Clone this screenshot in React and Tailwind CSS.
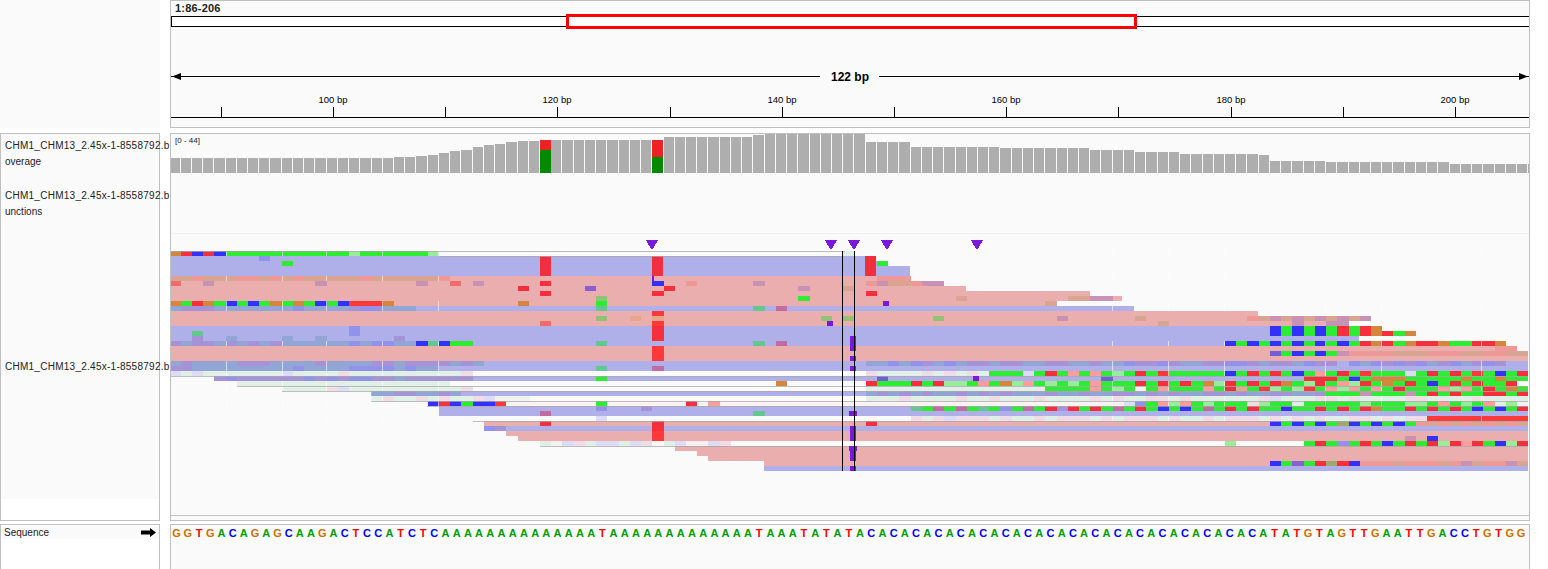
const BLUE = '#afafea'
const PINK = '#ebaeae'
const WHITE = '#fafafa'
const FAINT = '#eef4f0'

const COLORS = {
  a: '#2eec33', c: '#3232fa', t: '#f5303c', T: '#ff3838', o: '#d4863c',
  p: '#d8a690', q: '#ee9898', u: '#c892b4', n: '#90c472', R: '#f26a6a', O: '#e4a888',
  d: '#92a6d6', e: '#a692d6', f: '#9292ea', h: '#62c890', i: '#c06ca0',
  k: '#e0f0e6', l: '#f0dce6', j: '#dcdcf6', w: '#f6f0f0',
  M: '#98ee98', N: '#ff9c9c', x: '#7060d8', y: '#a0a870', z: '#8a60d0',
}

const colX = c => Math.max(171, Math.round(169.4 + 11.23 * c))

// read bodies: y, height, x start, x end, colour
const READS = [
  [251, 5, 171, 845, WHITE], [256, 5, 171, 876, BLUE], [261, 5, 171, 887, BLUE], [266, 10, 171, 910, BLUE],
  [276, 5, 171, 910, PINK], [281, 5, 171, 943, PINK], [286, 5, 171, 966, PINK], [291, 5, 171, 1090, PINK],
  [296, 5, 171, 1122, PINK], [301, 5, 171, 1056, PINK], [306, 5, 171, 1134, BLUE], [311, 5, 171, 1258, PINK],
  [316, 10, 171, 1348, PINK], [326, 5, 171, 1381, BLUE], [331, 5, 171, 1415, BLUE], [336, 5, 171, 1359, BLUE],
  [341, 5, 171, 1505, BLUE], [346, 5, 171, 1516, PINK], [351, 10, 171, 1528, PINK], [361, 10, 171, 1528, BLUE],
  [371, 5, 171, 473, FAINT], [371, 5, 473, 1528, WHITE], [376, 5, 214, 1528, BLUE], [381, 5, 237, 450, FAINT],
  [381, 5, 450, 1528, WHITE], [386, 5, 282, 473, FAINT], [386, 5, 473, 1528, WHITE], [391, 5, 371, 1528, BLUE],
  [396, 5, 371, 530, FAINT], [396, 5, 530, 1528, WHITE], [401, 5, 427, 1528, '#fbf2f2'], [406, 10, 439, 1528, BLUE],
  [416, 5, 473, 1528, WHITE], [421, 5, 484, 1528, PINK], [426, 5, 484, 1528, BLUE], [431, 5, 506, 1528, PINK],
  [436, 5, 518, 1528, PINK], [441, 5, 540, 1528, WHITE], [446, 5, 675, 1528, PINK], [451, 5, 697, 1528, PINK],
  [456, 5, 708, 1528, PINK], [461, 5, 764, 1528, PINK], [466, 5, 764, 1528, BLUE],
]

// thin grey lines under the low quality reads: y, x start, x end
const EDGES = [
  [251, 171, 845], [256, 440, 845], [376, 171, 1528], [386, 237, 1528], [391, 282, 1528], [401, 371, 1528],
  [406, 427, 1528], [421, 473, 1528], [446, 540, 1528],
]

// mismatches per row: y, first column, one code per column ('.' skips a column)
const BASES = [
  [251, 0, 'otctcaaaaaaaaaaaMaaaaaaM'], [251, 60, 'k'],
  [256, 8, 'f'], [261, 10, 'a'], [261, 63, 'a'],
  [276, 0, 'ppqpppqqpqpqpppppqppppppq'], [276, 63, 'qqq'],
  [281, 0, 'R..u.........u........u..R.u.....t.........c'], [281, 46, 'q.....u.........quppquu'],
  [286, 31, 't.....z......t'], [286, 56, 'u...p'],
  [291, 33, 't.........t..................t'],
  [296, 38, 'n.................a.............p.........pp'], [296, 82, 'uu'],
  [301, 0, 'oatoacacaoaoacacTTTo'], [301, 31, 'o......a'], [301, 78, 'p'],
  [306, 0, 'deeedddddddfddddeffddd'], [306, 38, 'h.............h.i'],
  [311, 43, 'T'],
  [316, 38, 'n..O.O..............n.n.......n..........u'], [316, 86, 'p.........qpupupupupu'],
  [321, 33, 'R.........T'], [321, 88, 'p...........u..uu'],
  [326, 16, 'f'], [326, 43, 't'], [326, 98, 'cacacatato'],
  [331, 2, 'h.............f'], [331, 43, 't'], [331, 98, 'cacacatatotao'],
  [336, 2, 'e..d....d..d......e'], [336, 43, 't'],
  [341, 0, 'edeededededdddddfdffddchcaa'], [341, 38, 'h.............h.i'],
  [341, 94, 'cacacacacacatotaottoaatto'],
  [346, 43, 'T'], [346, 118, 'qq'],
  [351, 43, 'T'], [351, 98, 'xacacauqqqqpppqqqppqqppu'],
  [356, 43, 'T'],
  [361, 0, 'deddddeeeddddeddddeedeeeeded'], [361, 62, 'ddfdfedfdeedeeddeeddeddfeefeddeeffedeedfee'],
  [361, 105, 'fdfefefdefdefe'],
  [366, 0, 'eedddddddddfddddffffdfdd'], [366, 38, 'h....i'],
  [371, 0, 'jkjkkkkkkkjkkkklkkkkkkkkkkl'],
  [371, 62, 'lkkkklklklkaaajataNaNaMataTaaaaacatatacaNataTaaajatataTacata'],
  [376, 4, 'efeeeeeefefeffeedeeeeee'], [376, 38, 'a'], [376, 63, 'x'],
  [376, 83, 'x'], [376, 101, 'tttacaoooaaaaaoaaoaat'],
  [381, 6, 'kkkkkkkkkkkkkkkkkkk'], [381, 54, 'o'],
  [381, 62, 'taaatatMMaNaoMNaMaMaN'],
  [381, 83, 'aaatatataoMtatatoaMtaNMtaoatacatataat'],
  [386, 10, 'kkkkljkkkkkkkkkkl'], [386, 62, 'kkkkkkkkkkkkkkkk'], [386, 78, 'aaaaN'],
  [386, 83, 'aMawaNaaaNatOaTMaMTaNMNaNataaaNMNataoa'],
  [391, 18, 'ddeedded'], [391, 62, 'dedededdedededddeddedde'],
  [391, 83, 'deedededdeededdeeddeaaauaaauatataattat'],
  [396, 18, 'klkklklkklj'], [396, 62, 'kkklkkkklkklkkklkkkkl'],
  [396, 83, 'klkkllklkkkkkkljkkkllklkkkkllkkkklkkkkl'],
  [401, 23, 'ctcaccT'], [401, 38, 'a'], [401, 46, 't.N'],
  [401, 83, 'wwjfaNMNaMaaalMaakaaaaaMaaaMMaNaMaNkMw'],
  [406, 38, 'f...e'], [406, 66, 'haiaiahafaiatetat'],
  [406, 83, 'aiatacacaiatataacaatatatoaatatatacacatat'],
  [411, 33, 'i..................h'],
  [416, 38, 'j'], [416, 66, 'lkljlllklkklklllk'],
  [416, 83, 'lklllklkklklllklklklkkllklkllTTTTTTTTTT'],
  [421, 33, 't.........t..................t'],
  [421, 98, 'cacacaycacacaqpqpqpqpqpp'],
  [426, 28, 'fe'], [426, 43, 't'],
  [431, 43, 'T'], [436, 43, 'T'], [436, 110, 'u.c'],
  [441, 33, 'kwjlkjjkjl.kjwwjl'], [441, 94, 'M......atafatacatatMtNtacMt'],
  [461, 98, 'cazatytcqqqpqqqpqupqqupq'],
]

// insertion markers, narrower than a base: x, y, width, height
const INSERTS = [
  [652, 276, 2, 5], [850, 336, 6, 15], [850, 356, 6, 5], [850, 366, 6, 5], [849, 411, 8, 5], [850, 426, 6, 15],
  [849, 446, 8, 5], [850, 451, 6, 10], [850, 466, 6, 5], [883, 301, 6, 5], [827, 321, 6, 5], [973, 376, 6, 5],
]

// small white gaps between overlapping reads
const SEAMS = [226, 282, 326, 382, 438, 1112, 1168, 1224, 1325, 1381, 1481]
const SEAM_ROWS = [[251, 5], [276, 5], [301, 10], [341, 5], [361, 15], [381, 10], [396, 10], [416, 5]]

const TOPS = [
  ...Array(20).fill(158), 157, 157, 156, 155, 153, 151, 150, 147, 145, 144, 142, 141, 141,
  ...Array(11).fill(140), ...Array(8).fill(137), 135, 134, 134, 134,
  ...Array(6).fill(133), ...Array(4).fill(142), ...Array(8).fill(147), ...Array(8).fill(148),
  ...Array(4).fill(150), ...Array(4).fill(152), ...Array(7).fill(154), 155,
  ...Array(5).fill(161), ...Array(11).fill(162), ...Array(8).fill(164),
]

const SEQUENCE = 'GGTGACAGAGCAAGACTCCATCTC' + 'A'.repeat(14) + 'T' + 'A'.repeat(13) + 'TAAATATAT' + 'AC'.repeat(18) + 'ATATGTAGTTGAATTGACCTGTGG'

const BASE_CLASS = { A: 'text-[#009f00]', C: 'text-[#0000ff]', G: 'text-[#cc7000]', T: 'text-[#ff0000]' }

const RULER_TICKS = [221, 333, 445, 557, 670, 782, 894, 1006, 1118, 1231, 1343, 1455]
const RULER_LABELS = [[333, '100 bp'], [557, '120 bp'], [782, '140 bp'], [1006, '160 bp'], [1231, '180 bp'], [1455, '200 bp']]

function Ruler() {
  return (
    <svg width="1358" height="126" viewBox="171 1 1358 126" className="block" shapeRendering="crispEdges">
      <text x="175" y="12" fontSize="11" fontWeight="700" fill="#222" letterSpacing="0.2">1:86-206</text>
      <rect x="171.5" y="16.5" width="1358" height="10" fill="#fff" stroke="#000" />
      <rect x="567.5" y="15.5" width="568" height="12" fill="#fff" stroke="#f00" strokeWidth="3" />
      <rect x="171" y="76" width="649" height="1" fill="#000" />
      <rect x="879" y="76" width="650" height="1" fill="#000" />
      <polygon points="172,76.5 181,73 181,80" fill="#000" shapeRendering="auto" />
      <polygon points="1528,76.5 1519,73 1519,80" fill="#000" shapeRendering="auto" />
      <text x="850" y="81" textAnchor="middle" fontSize="12" fontWeight="700" fill="#000">122 bp</text>
      {RULER_LABELS.map(([x, label]) => (
        <text key={x} x={x} y="103" textAnchor="middle" fontSize="9.5" fill="#000">{label}</text>
      ))}
      {RULER_TICKS.map(x => <rect key={x} x={x} y="107" width="1" height="10" fill="#000" />)}
      <rect x="171" y="117" width="1358" height="1" fill="#000" />
    </svg>
  )
}

function Coverage() {
  return (
    <>
      <text x="175" y="143" fontSize="8" fill="#222">[0 - 44]</text>
      {TOPS.map((top, c) => {
        const x = colX(c)
        const w = colX(c + 1) - x - 1
        return <rect key={c} x={x} y={top} width={w} height={173 - top} fill="#aeaeae" />
      })}
      <rect x="540" y="140" width="11" height="10" fill="#ee2222" />
      <rect x="540" y="150" width="11" height="23" fill="#008a00" />
      <rect x="652" y="140" width="11" height="17" fill="#ee2222" />
      <rect x="652" y="157" width="11" height="16" fill="#008a00" />
      <rect x="171" y="233" width="1358" height="1" fill="#f0f0f0" />
    </>
  )
}

function Pileup() {
  const cells = []
  BASES.forEach(([y, from, codes], i) => {
    ;[...codes].forEach((code, n) => {
      if (!COLORS[code]) return
      const c = from + n
      if (c > 120) return
      cells.push(<rect key={`${i}-${n}`} x={colX(c)} y={y} width={colX(c + 1) - colX(c)} height="5" fill={COLORS[code]} />)
    })
  })
  return (
    <>
      {READS.map(([y, h, x1, x2, fill], i) => (
        <rect key={i} x={x1} y={y} width={x2 - x1} height={h} fill={fill} />
      ))}
      <rect x="540" y="256" width="11" height="20" fill="#f0303e" />
      <rect x="652" y="256" width="11" height="20" fill="#f0303e" />
      <rect x="865" y="256" width="11" height="20" fill="#f0303e" />
      {cells}
      {SEAM_ROWS.map(([y, h]) => SEAMS.map(x => (
        <rect key={`${y}-${x}`} x={x} y={y} width="1" height={h} fill="#fff" opacity="0.6" />
      )))}
      {EDGES.map(([y, x1, x2]) => (
        <rect key={y} x={x1} y={y} width={x2 - x1} height="1" fill="#a8a8a8" opacity="0.75" />
      ))}
      {INSERTS.map(([x, y, w, h]) => (
        <rect key={`${x}-${y}`} x={x} y={y} width={w} height={h} fill="#7a18dc" />
      ))}
      <rect x="842" y="251" width="1" height="220" fill="#000" />
      <rect x="854" y="251" width="1" height="220" fill="#000" />
      {[652, 831, 854, 887, 977].map(x => (
        <polygon key={x} points={`${x - 6},240 ${x + 6},240 ${x + 1},249 ${x - 1},249`} fill="#7a18dc" />
      ))}
      <rect x="171" y="515" width="1358" height="1" fill="#c4c4c4" />
    </>
  )
}

function TrackLabel({ lines }) {
  return (
    <div className="pl-1 whitespace-nowrap">
      <p className="h-4 leading-4 tracking-[0.26px]">{lines[0]}</p>
      {lines[1] && <p className="h-4 leading-4">{lines[1]}</p>}
    </div>
  )
}

export default function App() {
  return (
    <div className="w-[1548px] h-[569px] overflow-hidden bg-white flex flex-col font-['Liberation_Sans',sans-serif] text-[10px] text-[#222]">
      {/* Header: ruler and overview */}
      <div className="flex h-[128px] shrink-0">
        <div className="w-[160px] bg-[#fafafa]" />
        <div className="ml-[10px] w-[1360px] border border-[#c0c0c0] bg-[#fafafa]">
          <Ruler />
        </div>
      </div>

      {/* Tracks */}
      <div className="flex h-[388px] mt-[5px] shrink-0">
        <div className="w-[160px] border border-[#c0c0c0] flex flex-col">
          <div className="h-[365px] bg-[#fafafa] flex flex-col">
            <div className="h-[50px] pt-1">
              <TrackLabel lines={['CHM1_CHM13_2.45x-1-8558792.b', 'overage']} />
            </div>
            <div className="h-[50px] pt-1">
              <TrackLabel lines={['CHM1_CHM13_2.45x-1-8558792.b', 'unctions']} />
            </div>
            <div className="flex-1 flex items-center">
              <TrackLabel lines={['CHM1_CHM13_2.45x-1-8558792.b']} />
            </div>
          </div>
        </div>
        <div className="ml-[10px] w-[1360px] border border-[#c0c0c0] bg-[#fafafa] relative">
          <svg width="1358" height="386" viewBox="171 134 1358 386" className="block" shapeRendering="crispEdges">
            <Coverage />
            <Pileup />
          </svg>
        </div>
      </div>

      {/* Sequence */}
      <div className="flex flex-1 mt-[3px] min-h-0">
        <div className="w-[160px] border border-b-0 border-[#c0c0c0]">
          <div className="h-[13px] bg-[#fafafa] flex items-center justify-between px-[3px] mt-[1px]">
            <span>Sequence</span>
            <svg width="15" height="9" viewBox="0 0 15 9">
              <polygon points="0,2.5 9,2.5 9,0 15,4.5 9,9 9,6.5 0,6.5" fill="#000" />
            </svg>
          </div>
        </div>
        <div className="ml-[10px] w-[1360px] border border-b-0 border-[#c0c0c0] bg-[#fafafa]">
          <div className="flex pt-[2px] text-[11px] font-bold leading-3">
            {[...SEQUENCE].map((base, i) => (
              <span key={i} className={`w-[11.21px] shrink-0 text-center ${BASE_CLASS[base]}`}>{base}</span>
            ))}
          </div>
        </div>
      </div>
    </div>
  )
}
